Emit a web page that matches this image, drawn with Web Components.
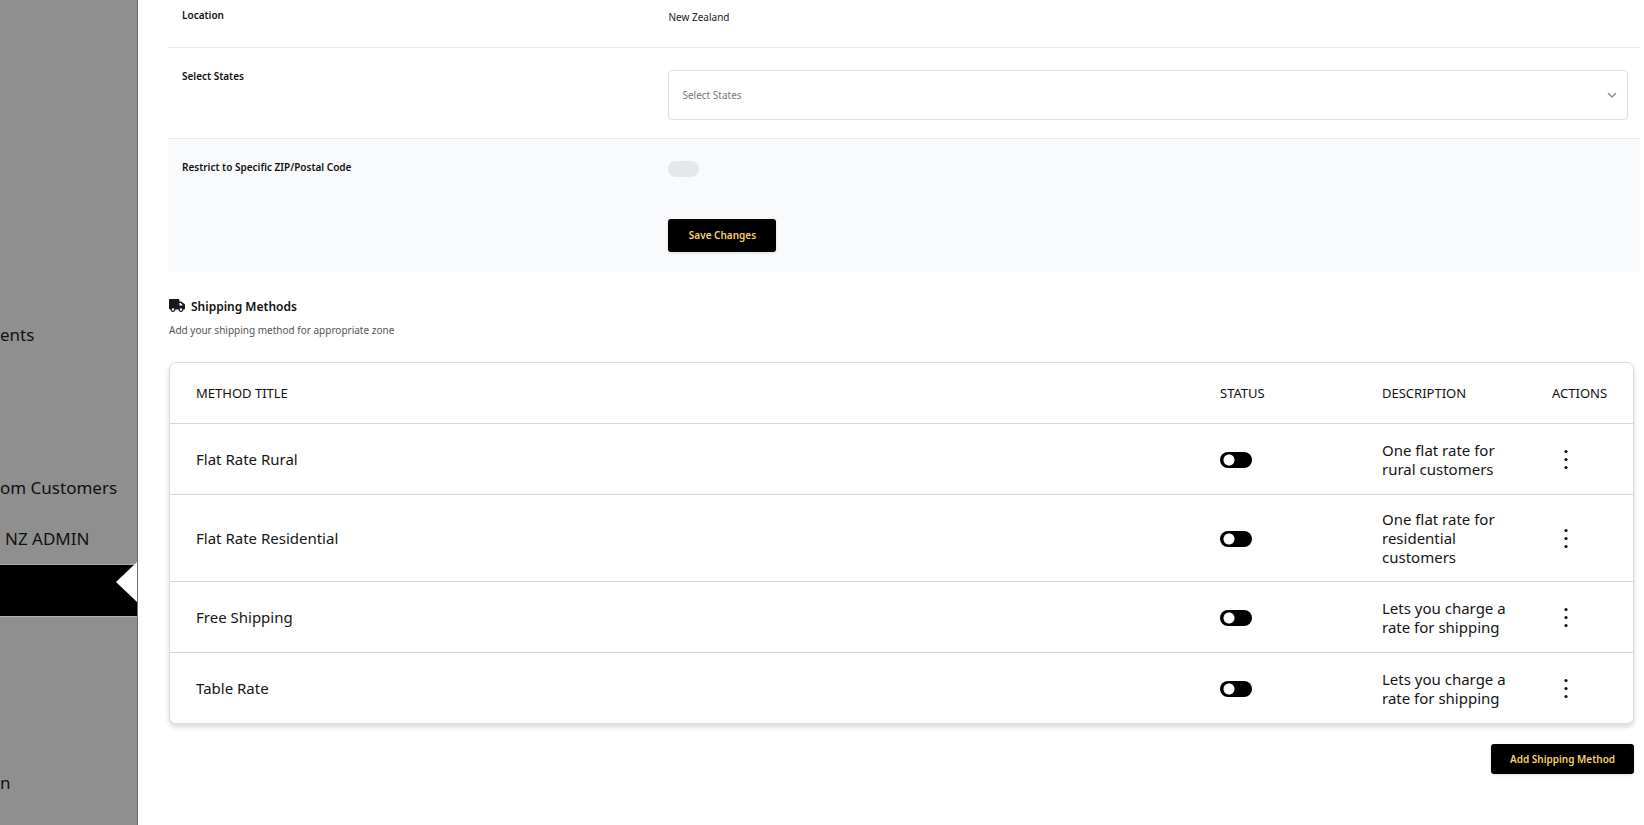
<!DOCTYPE html>
<html lang="en">
<head>
<meta charset="utf-8">
<title>Shipping Zone</title>
<style>
html, body { margin: 0; background: #fff; }
body { font-family: "Noto Sans", "Open Sans", sans-serif; color: #111; }
</style>
</head>
<body>
<shipping-app></shipping-app>

<script>
const define = (name, html, setup) => {
  const template = document.createElement('template');
  template.innerHTML = html;
  customElements.define(name, class extends HTMLElement {
    constructor() {
      super();
      this.attachShadow({ mode: 'open' }).append(template.content.cloneNode(true));
    }
    connectedCallback() {
      if (setup && !this.ready) { this.ready = true; setup(this, this.shadowRoot); }
    }
  });
};

/* Shared look of the black action buttons */
const buttonStyle = `
  button { box-sizing: border-box; border: 0; border-radius: 3px; background: #000; color: #f6d365;
    font: 600 10px/16px "Noto Sans", sans-serif; cursor: pointer; box-shadow: 0 1px 3px rgba(0,0,0,.12); }`;

define('side-menu', `
  <style>
    :host { display: block; box-sizing: border-box; background: #8f8f8f; border-right: 1px solid #6c6c6c; }
    ul { list-style: none; margin: 0; padding: 309px 0 0; }
    li { height: 51px; }
    li.apart { margin-top: 140px; }
    a { display: block; color: #111; font-size: 17px; line-height: 51px; text-decoration: none; white-space: nowrap; }
    .indent { padding-left: 5px; }
    .active { display: flex; justify-content: flex-end; align-items: center; background: #000;
      border-top: 1px solid #aaa; border-bottom: 1px solid #b4b4b4; }
    .active svg { display: block; flex: none; width: 21px; height: 40px; margin-bottom: 18px; }
  </style>
  <nav aria-label="Store menu">
    <ul>
      <li><a href="#">ents</a></li>
      <li></li>
      <li></li>
      <li><a href="#">om Customers</a></li>
      <li class="indent"><a href="#">NZ ADMIN</a></li>
      <li class="active"><svg viewBox="0 0 21 40" aria-hidden="true"><path d="M21 0V40L0 20Z" fill="#fff"/></svg></li>
      <li class="apart"><a href="#">n</a></li>
    </ul>
  </nav>`);

define('form-row', `
  <style>
    :host { display: grid; grid-template-columns: 34% 1fr; box-sizing: border-box; min-height: 61px;
      border-bottom: 1px solid #e9e9e9; font-size: 10px; line-height: 16px; }
    :host([shaded]) { background: #f9fafc; border-bottom: 0; }
    .label { padding: 20px 14px; font-weight: 600; color: #111; }
    .value { padding: 22px 12px 18px 0; color: #222; }
  </style>
  <div class="label"><slot name="label"></slot></div>
  <div class="value"><slot></slot></div>`);

define('zone-form', `
  <style>
    :host { display: block; }
    ${buttonStyle}
    .picker { position: relative; display: block; }
    select { display: block; box-sizing: border-box; width: 100%; height: 50px; padding: 0 13px; appearance: none;
      border: 1px solid #dedede; border-radius: 4px; background: #fff; color: #777;
      font: 10px/16px "Noto Sans", sans-serif; }
    .picker svg { position: absolute; right: 11px; top: 20px; width: 10px; height: 10px; pointer-events: none; }
    input { display: block; appearance: none; width: 31px; height: 16px; margin: 0; border-radius: 8px; background: #e6e7e9; }
    button { display: block; width: 108px; height: 33px; margin-top: 42px; margin-bottom: 2px; padding-bottom: 3px; }
  </style>
  <form>
    <form-row><span slot="label">Location</span>New Zealand</form-row>
    <form-row>
      <label slot="label" for="states">Select States</label>
      <span class="picker">
        <select id="states"><option>Select States</option></select>
        <svg viewBox="0 0 10 10" fill="none" stroke="#8a8a8a" stroke-width="1.4" aria-hidden="true"><path d="M1 3L5 7L9 3"/></svg>
      </span>
    </form-row>
    <form-row shaded>
      <label slot="label" for="zip">Restrict to Specific ZIP/Postal Code</label>
      <input id="zip" type="checkbox" role="switch">
      <button type="button">Save Changes</button>
    </form-row>
  </form>`);

define('section-heading', `
  <style>
    :host { display: block; }
    h2 { display: flex; align-items: center; gap: 6px; margin: 0; font-size: 12px; line-height: 24px; font-weight: 600; color: #111; }
    svg { width: 16px; height: 13px; margin-bottom: 3px; }
    p { margin: 3px 0 0; font-size: 10px; line-height: 16px; color: #555; }
  </style>
  <h2><svg viewBox="0 0 640 512" aria-hidden="true"><path fill="#15181e" d="M48 0C21.500 0 0 21.500 0 48V368c0 26.500 21.500 48 48 48H64c0 53 43 96 96 96s96-43 96-96H384c0 53 43 96 96 96s96-43 96-96h32c17.700 0 32-14.300 32-32s0-14 0-32V256 237.300c0-17-6.700-33.300-18.700-45.300L512 114.700c-12-12-28.300-18.700-45.300-18.700H416V48c0-26.500-21.500-48-48-48H48zM416 160h50.700L544 237.300V256H416V160zM112 416a48 48 0 1 1 96 0 48 48 0 1 1 -96 0zm368-48a48 48 0 1 1 0 96 48 48 0 1 1 0-96z"/></svg><slot></slot></h2>
  <p><slot name="note"></slot></p>`);

define('methods-table', `
  <style>
    :host { display: block; box-sizing: border-box; border: 1px solid #dcdcdc; border-radius: 7px; background: #fff;
      box-shadow: 0 3px 5px rgba(0,0,0,.16); }
    table { width: 100%; table-layout: fixed; border-collapse: separate; border-spacing: 0; }
    col.status { width: 162px; }
    col.description { width: 170px; }
    col.actions { width: 107px; }
    th, td { box-sizing: border-box; padding: 15px 15px 14px 26px; text-align: left; vertical-align: middle; }
    th { height: 61px; border-bottom: 1px solid #d6d6d6; font-size: 13px; line-height: 19px; font-weight: 400; color: #111; }
    td { height: 71px; border-bottom: 1px solid #d6d6d6; font-size: 15px; line-height: 19px; color: #151515; }
    tbody tr:last-child td { height: 70px; border-bottom: 0; }
    input { display: block; appearance: none; width: 32px; height: 16px; margin: 0; border-radius: 8px;
      background: radial-gradient(circle at 9px 8px, #fff 5px, #000 6px); }
    button { display: block; width: 28px; height: 28px; padding: 0; border: 0; background: none; }
    svg { display: block; width: 28px; height: 28px; }
  </style>
  <table>
    <colgroup><col><col class="status"><col class="description"><col class="actions"></colgroup>
    <thead><tr><th>METHOD TITLE</th><th>STATUS</th><th>DESCRIPTION</th><th>ACTIONS</th></tr></thead>
    <tbody></tbody>
  </table>`, (host, root) => {
  const methods = [
    ['Flat Rate Rural', 'One flat rate for rural customers'],
    ['Flat Rate Residential', 'One flat rate for residential customers'],
    ['Free Shipping', 'Lets you charge a rate for shipping'],
    ['Table Rate', 'Lets you charge a rate for shipping']
  ];
  root.querySelector('tbody').innerHTML = methods.map(([title, text]) => `
    <tr>
      <td>${title}</td>
      <td><input type="checkbox" role="switch" aria-label="${title} status"></td>
      <td>${text}</td>
      <td><button type="button" aria-label="${title} actions"><svg viewBox="0 0 28 28" fill="#111" aria-hidden="true"><circle cx="14" cy="5.500" r="1.600"/><circle cx="14" cy="13.500" r="1.600"/><circle cx="14" cy="21.500" r="1.600"/></svg></button></td>
    </tr>`).join('');
});

define('shipping-app', `
  <style>
    :host { display: grid; grid-template-columns: 138px minmax(0, 1fr); min-height: 100vh; }
    main { padding: 0 4px 0 30px; }
    zone-form { margin-top: -13px; }
    section { padding: 23px 6px 0 1px; }
    methods-table { margin-top: 24px; }
    footer { display: flex; justify-content: flex-end; margin-top: 20px; }
    ${buttonStyle}
    button { width: 143px; height: 30px; }
  </style>
  <side-menu></side-menu>
  <main>
    <zone-form></zone-form>
    <section>
      <section-heading>Shipping Methods<span slot="note">Add your shipping method for appropriate zone</span></section-heading>
      <methods-table></methods-table>
      <footer><button type="button">Add Shipping Method</button></footer>
    </section>
  </main>`);
</script>
</body>
</html>
